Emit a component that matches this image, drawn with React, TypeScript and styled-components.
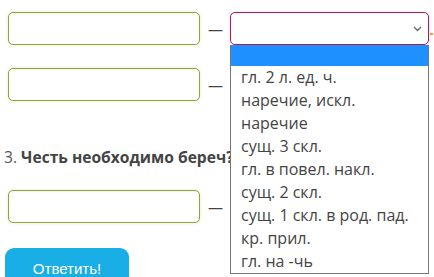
import React from 'react';
import styled, { createGlobalStyle } from 'styled-components';

const Global = createGlobalStyle`
  html, body {
    margin: 0;
    padding: 0;
    background: #ffffff;
    overflow: hidden;
  }
  body {
    font-family: 'Open Sans', 'Noto Sans', sans-serif;
    color: #555;
  }
`;

const Page = styled.div`
  width: 434px;
  height: 277px;
  position: relative;
  padding: 12px 0 0 8px;
  box-sizing: border-box;
  overflow: hidden;
`;

const Row = styled.div<{ gap?: number }>`
  display: flex;
  align-items: center;
  gap: 8px;
  margin-bottom: ${p => p.gap ?? 0}px;
`;

const AnswerInput = styled.div`
  width: 192px;
  height: 33px;
  flex-shrink: 0;
  box-sizing: border-box;
  border: 1px solid #8ea53b;
  border-radius: 5px;
  background: #fff;
  box-shadow: 0 0 3px rgba(200, 205, 120, 0.45), inset 0 1px 2px rgba(0, 0, 0, 0.06);
`;

const Dash = styled.span`
  width: 14px;
  font-size: 15px;
  line-height: 15px;
  color: #444;
  margin-top: 2px;
`;

const SelectBox = styled.div`
  position: relative;
  width: 199px;
  height: 33px;
  box-sizing: border-box;
  border: 1px solid #b3175a;
  border-radius: 5px;
  background: #fff;
  display: flex;
  align-items: center;
  justify-content: flex-end;
  padding-right: 6px;
  box-shadow: 0 0 3px rgba(220, 170, 190, 0.45);
`;

const Mark = styled.span`
  position: absolute;
  right: -5px;
  top: 20px;
  width: 3px;
  height: 2px;
  background: #f0a040;
`;

const Dropdown = styled.ul`
  position: absolute;
  left: 230px;
  top: 45px;
  width: 199px;
  margin: 0;
  padding: 0;
  list-style: none;
  box-sizing: border-box;
  border: 1px solid #767676;
  border-top: none;
  background: #fff;
  z-index: 5;
`;

const Option = styled.li<{ active?: boolean }>`
  height: ${p => (p.active ? 21 : 23)}px;
  line-height: 23px;
  padding-left: 10px;
  font-size: 16px;
  color: #444;
  white-space: nowrap;
  background: ${p => (p.active ? '#1e90ff' : '#fff')};
`;

const Question = styled.p`
  margin: 45px 0 22px -4px;
  font-size: 15.6px;
  line-height: 22px;
  color: #555;
  white-space: nowrap;
`;

const Bold = styled.b`
  font-weight: 700;
  color: #444;
`;

const Button = styled.button`
  display: block;
  margin-left: -3px;
  width: 124px;
  height: 40px;
  border: none;
  border-radius: 9px;
  background: #19aee6;
  color: #fff;
  font-family: 'Liberation Sans', Arial, sans-serif;
  font-size: 15px;
  padding: 0;
  cursor: pointer;
`;

const Chevron = () => (
  <svg width="9" height="6" viewBox="0 0 9 6">
    <path d="M1 1l3.5 3.5L8 1" fill="none" stroke="#666" strokeWidth="1.3" />
  </svg>
);

const options = [
  'гл. 2 л. ед. ч.',
  'наречие, искл.',
  'наречие',
  'сущ. 3 скл.',
  'гл. в повел. накл.',
  'сущ. 2 скл.',
  'сущ. 1 скл. в род. пад.',
  'кр. прил.',
  'гл. на -чь',
];

export default function App() {
  return (
    <Page>
      <Global />
      <Row gap={23}>
        <AnswerInput />
        <Dash>—</Dash>
        <SelectBox>
          <Chevron />
          <Mark />
        </SelectBox>
      </Row>
      <Row>
        <AnswerInput />
        <Dash>—</Dash>
      </Row>
      <Question>
        3. <Bold>Честь необходимо береч?</Bold>
      </Question>
      <Row gap={25}>
        <AnswerInput />
        <Dash>—</Dash>
      </Row>
      <Button>Ответить!</Button>
      <Dropdown>
        <Option active />
        {options.map(o => (
          <Option key={o}>{o}</Option>
        ))}
      </Dropdown>
    </Page>
  );
}
